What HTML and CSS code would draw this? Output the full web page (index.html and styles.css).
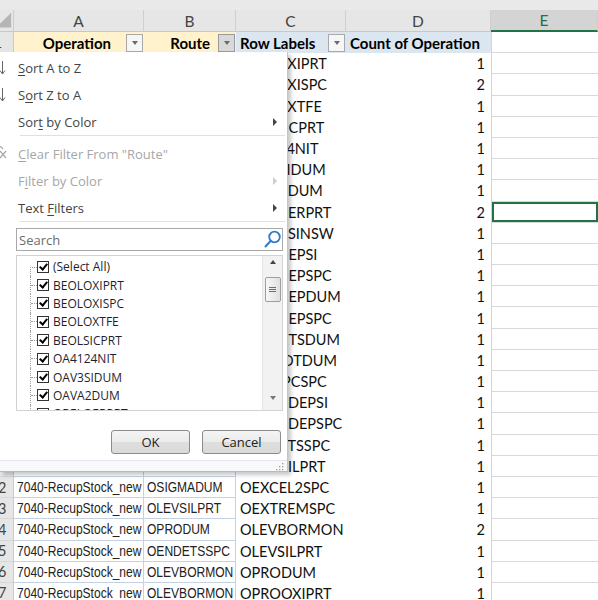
FILE: index.html
```html
<!DOCTYPE html>
<html>
<head>
    <title>Filter - Route</title>
    <link rel="stylesheet" href="styles.css">
</head>
<body>
<div class="app">
    <div class="topbar"></div>

    <div class="sheet">
        <div class="corner"><svg width="14" height="22" viewBox="0 0 14 22"><polygon points="12,2 12,18 0,18 0,14" fill="#b5b5b5"/></svg></div>
        <div class="col">A</div>
        <div class="col">B</div>
        <div class="col">C</div>
        <div class="col">D</div>
        <div class="col col-sel">E</div>

        <div class="rh"><span>1</span></div>
        <div class="th th-a"><span class="th-label">Operation</span><span class="dd"></span></div>
        <div class="th th-b"><span class="th-label">Route</span><span class="dd dd-on"></span></div>
        <div class="th th-c"><span class="th-label">Row Labels</span><span class="dd"></span></div>
        <div class="th th-d"><span class="th-label">Count of Operation</span></div>
        <div class="e"></div>

        <div class="rh"><span>2</span></div><div class="ab"></div><div class="ab"></div><div class="lbl">BEOLOXIPRT</div><div class="cnt">1</div><div class="e"></div>
        <div class="rh"><span>3</span></div><div class="ab"></div><div class="ab"></div><div class="lbl">BEOLOXISPC</div><div class="cnt">2</div><div class="e"></div>
        <div class="rh"><span>4</span></div><div class="ab"></div><div class="ab"></div><div class="lbl">BEOLOXTFE</div><div class="cnt">1</div><div class="e"></div>
        <div class="rh"><span>5</span></div><div class="ab"></div><div class="ab"></div><div class="lbl">BEOLSICPRT</div><div class="cnt">1</div><div class="e"></div>
        <div class="rh"><span>6</span></div><div class="ab"></div><div class="ab"></div><div class="lbl">OA4124NIT</div><div class="cnt">1</div><div class="e"></div>
        <div class="rh"><span>7</span></div><div class="ab"></div><div class="ab"></div><div class="lbl">OAV3SIDUM</div><div class="cnt">1</div><div class="e"></div>
        <div class="rh"><span>8</span></div><div class="ab"></div><div class="ab"></div><div class="lbl">OAVA2DUM</div><div class="cnt">1</div><div class="e"></div>
        <div class="rh"><span>9</span></div><div class="ab"></div><div class="ab"></div><div class="lbl">OBELOERPRT</div><div class="cnt">2</div><div class="e e-sel"></div>
        <div class="rh"><span>10</span></div><div class="ab"></div><div class="ab"></div><div class="lbl">OBELOSINSW</div><div class="cnt">1</div><div class="e"></div>
        <div class="rh"><span>11</span></div><div class="ab"></div><div class="ab"></div><div class="lbl">OLEBOEPSI</div><div class="cnt">1</div><div class="e"></div>
        <div class="rh"><span>12</span></div><div class="ab"></div><div class="ab"></div><div class="lbl">OLEBOEPSPC</div><div class="cnt">1</div><div class="e"></div>
        <div class="rh"><span>13</span></div><div class="ab"></div><div class="ab"></div><div class="lbl">OBOLEEPDUM</div><div class="cnt">1</div><div class="e"></div>
        <div class="rh"><span>14</span></div><div class="ab"></div><div class="ab"></div><div class="lbl">OBOLEEPSPC</div><div class="cnt">1</div><div class="e"></div>
        <div class="rh"><span>15</span></div><div class="ab"></div><div class="ab"></div><div class="lbl">OLBOETSDUM</div><div class="cnt">1</div><div class="e"></div>
        <div class="rh"><span>16</span></div><div class="ab"></div><div class="ab"></div><div class="lbl">OENDOTDUM</div><div class="cnt">1</div><div class="e"></div>
        <div class="rh"><span>17</span></div><div class="ab"></div><div class="ab"></div><div class="lbl">OENDPCSPC</div><div class="cnt">1</div><div class="e"></div>
        <div class="rh"><span>18</span></div><div class="ab"></div><div class="ab"></div><div class="lbl">OBELODEPSI</div><div class="cnt">1</div><div class="e"></div>
        <div class="rh"><span>19</span></div><div class="ab"></div><div class="ab"></div><div class="lbl">OBELODEPSPC</div><div class="cnt">1</div><div class="e"></div>
        <div class="rh"><span>20</span></div><div class="ab"></div><div class="ab"></div><div class="lbl">OBELOTSSPC</div><div class="cnt">1</div><div class="e"></div>
        <div class="rh"><span>21</span></div><div class="ab"></div><div class="ab"></div><div class="lbl">OBELOILPRT</div><div class="cnt">1</div><div class="e"></div>

        <div class="rh"><span>22</span></div><div class="ab"><span>7040-RecupStock_new</span></div><div class="ab"><span>OSIGMADUM</span></div><div class="lbl">OEXCEL2SPC</div><div class="cnt">1</div><div class="e"></div>
        <div class="rh"><span>23</span></div><div class="ab"><span>7040-RecupStock_new</span></div><div class="ab"><span>OLEVSILPRT</span></div><div class="lbl">OEXTREMSPC</div><div class="cnt">1</div><div class="e"></div>
        <div class="rh"><span>24</span></div><div class="ab"><span>7040-RecupStock_new</span></div><div class="ab"><span>OPRODUM</span></div><div class="lbl">OLEVBORMON</div><div class="cnt">2</div><div class="e"></div>
        <div class="rh"><span>25</span></div><div class="ab"><span>7040-RecupStock_new</span></div><div class="ab"><span>OENDETSSPC</span></div><div class="lbl">OLEVSILPRT</div><div class="cnt">1</div><div class="e"></div>
        <div class="rh"><span>26</span></div><div class="ab"><span>7040-RecupStock_new</span></div><div class="ab"><span>OLEVBORMON</span></div><div class="lbl">OPRODUM</div><div class="cnt">1</div><div class="e"></div>
        <div class="rh"><span>27</span></div><div class="ab"><span>7040-RecupStock_new</span></div><div class="ab"><span>OLEVBORMON</span></div><div class="lbl">OPROOXIPRT</div><div class="cnt">1</div><div class="e"></div>
    </div>

    <!-- filter dropdown of the Route column -->
    <div class="filter">
        <div class="mi">
            <span class="ico"><svg width="8" height="16" viewBox="0 0 8 16"><path d="M2.5 1V14M0 10.5L2.5 14L5 10.5" fill="none" stroke="#666" stroke-width="1"/></svg></span>
            <span class="txt"><u>S</u>ort A to Z</span>
        </div>
        <div class="mi">
            <span class="ico"><svg width="8" height="16" viewBox="0 0 8 16"><path d="M2.5 1V14M0 10.5L2.5 14L5 10.5" fill="none" stroke="#666" stroke-width="1"/></svg></span>
            <span class="txt">S<u>o</u>rt Z to A</span>
        </div>
        <div class="mi">
            <span class="ico"></span>
            <span class="txt">Sor<u>t</u> by Color</span>
            <span class="sub"></span>
        </div>
        <div class="sep"></div>
        <div class="mi off">
            <span class="ico"><svg width="8" height="16" viewBox="0 0 8 16"><path d="M0 0L3 3M0 5L6 12M6 5L0 12" fill="none" stroke="#a8a8a8" stroke-width="1.2"/></svg></span>
            <span class="txt"><u>C</u>lear Filter From "Route"</span>
        </div>
        <div class="mi off">
            <span class="ico"></span>
            <span class="txt">F<u>i</u>lter by Color</span>
            <span class="sub"></span>
        </div>
        <div class="mi">
            <span class="ico"></span>
            <span class="txt">Text <u>F</u>ilters</span>
            <span class="sub"></span>
        </div>
        <div class="sep sep-last"></div>

        <div class="search">
            <span class="ph">Search</span>
            <svg width="20" height="21" viewBox="0 0 20 21"><circle cx="12.5" cy="8" r="5.3" fill="none" stroke="#2f7bd0" stroke-width="1.8"/><path d="M8.8 11.8L3.5 17.5" stroke="#2f7bd0" stroke-width="2" stroke-linecap="round"/></svg>
        </div>

        <div class="list">
            <div class="tree">
                <div class="node first"><span class="twig"></span><span class="cb"></span><span class="name">(Select All)</span></div>
                <div class="node"><span class="twig"></span><span class="cb"></span><span class="name">BEOLOXIPRT</span></div>
                <div class="node"><span class="twig"></span><span class="cb"></span><span class="name">BEOLOXISPC</span></div>
                <div class="node"><span class="twig"></span><span class="cb"></span><span class="name">BEOLOXTFE</span></div>
                <div class="node"><span class="twig"></span><span class="cb"></span><span class="name">BEOLSICPRT</span></div>
                <div class="node"><span class="twig"></span><span class="cb"></span><span class="name">OA4124NIT</span></div>
                <div class="node"><span class="twig"></span><span class="cb"></span><span class="name">OAV3SIDUM</span></div>
                <div class="node"><span class="twig"></span><span class="cb"></span><span class="name">OAVA2DUM</span></div>
                <div class="node"><span class="twig"></span><span class="cb"></span><span class="name">OBELOERPRT</span></div>
            </div>
            <div class="scroll">
                <span class="arr-up"></span>
                <span class="thumb"><span class="grip"></span></span>
                <span class="arr-down"></span>
            </div>
        </div>

        <div class="btns">
            <button class="btn">OK</button>
            <button class="btn">Cancel</button>
        </div>

        <div class="foot">
            <svg width="9" height="9" viewBox="0 0 9 9" fill="#9a9a9a"><rect x="7" y="1" width="1.3" height="1.3"/><rect x="4" y="4" width="1.3" height="1.3"/><rect x="7" y="4" width="1.3" height="1.3"/><rect x="1" y="7" width="1.3" height="1.3"/><rect x="4" y="7" width="1.3" height="1.3"/><rect x="7" y="7" width="1.3" height="1.3"/></svg>
        </div>
    </div>
</div>
</body>
</html>
```

FILE: styles.css
```css
body {
    margin: 0;
    padding: 0;
    background: #fff;
    font-family: Lato, "Open Sans", sans-serif;
}
.app {
    position: relative;
    width: 598px;
    height: 600px;
    overflow: hidden;
}
.topbar {
    height: 10px;
    background: #e9e9e9;
}

/* grid of cells */
.sheet {
    display: grid;
    grid-template-columns: 14px 130px 92px 110px 145px 107px;
    grid-template-rows: 22px;
    grid-auto-rows: 21.2px;
    font-size: 14.5px;
    color: #111;
}
.sheet > div {
    box-sizing: border-box;
    display: flex;
    align-items: center;
    overflow: hidden;
    white-space: nowrap;
}
.corner {
    background: #e6e6e6;
    border-right: 1px solid #cdcdcd;
    border-bottom: 1px solid #c8c8c8;
}
.col {
    justify-content: center;
    background: #e6e6e6;
    border-right: 1px solid #cfcfcf;
    border-bottom: 1px solid #c8c8c8;
    color: #444;
    font-size: 15.5px;
}
.col-sel {
    background: #d4d4d4;
    color: #217346;
    border-bottom: 2px solid #217346;
}
.rh {
    justify-content: flex-end;
    background: #e6e6e6;
    border-right: 1px solid #c9c9c9;
    border-bottom: 1px solid #d6d6d6;
    color: #444;
}
.rh span {
    flex: 0 0 30px;
    text-align: center;
}

.th {
    font-weight: bold;
    font-size: 15px;
    color: #000;
}
.th-a, .th-b {
    background: #fff2cc;
}
.th-c, .th-d {
    background: #dce6f1;
}
.th-label {
    flex: 1;
}
.th-a .th-label {
    text-align: right;
    padding-right: 15px;
}
.th-b .th-label {
    text-align: right;
    padding-right: 8px;
}
.th-c .th-label, .th-d .th-label {
    padding-left: 4px;
}
.dd {
    flex: none;
    width: 17px;
    height: 18px;
    box-sizing: border-box;
    margin-right: 1px;
    border: 1px solid #a9a9a9;
    background: #f6f6f6;
    display: flex;
    align-items: center;
    justify-content: center;
}
.dd::after {
    content: "";
    border-left: 3.5px solid transparent;
    border-right: 3.5px solid transparent;
    border-top: 4px solid #6a6a6a;
}
.dd-on {
    background: #d9d9d9;
    border-color: #9a9a9a;
}

/* table cells use a narrow face; squeeze Arial metrics to match it */
.ab {
    padding-left: 3px;
    border-right: 1px solid #c4d2e6;
    border-bottom: 1px solid #c4d2e6;
    font-family: "Liberation Sans", Arial, sans-serif;
    font-size: 14.5px;
    color: #222;
}
.ab span {
    display: inline-block;
    transform: scaleX(0.83);
    transform-origin: left center;
}
.lbl {
    padding-left: 4px;
}
.cnt {
    justify-content: flex-end;
    padding-right: 6px;
}
.e {
    border-left: 1px solid #d4d4d4;
    border-bottom: 1px solid #d9d9d9;
}
.e-sel {
    box-shadow: inset 0 0 0 2px #217346;
}

/* filter dropdown */
.filter {
    position: absolute;
    left: 0;
    top: 52px;
    width: 288px;
    box-sizing: border-box;
    padding-top: 2px;
    background: #fff;
    border-right: 1px solid #c4c4c4;
    border-bottom: 1px solid #b9b9b9;
    box-shadow: 3px 3px 4px rgba(0, 0, 0, 0.22);
    font-family: "Open Sans", "Noto Sans", sans-serif;
    display: flex;
    flex-direction: column;
}
.mi {
    height: 27px;
    display: flex;
    align-items: center;
    font-size: 13px;
    color: #444;
}
.mi u {
    text-underline-offset: 2px;
}
.ico {
    flex: none;
    width: 18px;
    display: flex;
}
.txt {
    flex: 1;
}
.sub {
    width: 0;
    height: 0;
    margin-right: 10px;
    border-left: 4px solid #444;
    border-top: 4px solid transparent;
    border-bottom: 4px solid transparent;
}
.mi.off {
    color: #a6a6a6;
}
.mi.off .sub {
    border-left-color: #cccccc;
}
.sep {
    height: 1px;
    margin: 0 2px 4px 20px;
    background: #e0e0e0;
}
.sep-last {
    margin-bottom: 6px;
}

.search {
    height: 23px;
    margin: 0 4px 0 16px;
    box-sizing: border-box;
    border: 1px solid #a9a9a9;
    display: flex;
    align-items: center;
    padding-left: 2px;
    font-size: 13px;
    color: #6d6d6d;
}
.ph {
    flex: 1;
}

.list {
    height: 156px;
    margin: 4px 4px 0 16px;
    box-sizing: border-box;
    border: 1px solid #d2d2d2;
    display: flex;
}
.tree {
    flex: 1;
    overflow: hidden;
    padding-top: 1.5px;
}
.node {
    height: 18.4px;
    margin-left: 13px;
    border-left: 1px dotted #a0a0a0;
    display: flex;
    align-items: center;
    font-size: 12px;
    color: #1f1f2f;
}
.twig {
    width: 6px;
    box-sizing: border-box;
    border-top: 1px dotted #a0a0a0;
}
.node.first {
    border-left: none;
}
.node.first .twig {
    width: 7px;
    height: 9px;
    align-self: flex-end;
    border-left: 1px dotted #a0a0a0;
}
.cb {
    flex: none;
    position: relative;
    width: 12px;
    height: 12px;
    box-sizing: border-box;
    border: 1px solid #333;
    background: #fff;
}
.cb::after {
    content: "";
    position: absolute;
    left: 3px;
    top: 0;
    width: 3px;
    height: 6px;
    border: solid #000;
    border-width: 0 2px 2px 0;
    transform: rotate(40deg);
}
.name {
    margin-left: 4px;
}

.scroll {
    flex: none;
    width: 20px;
    box-sizing: border-box;
    background: #f2f2f2;
    border-left: 1px solid #e6e6e6;
    display: flex;
    flex-direction: column;
    align-items: center;
}
.arr-up, .arr-down {
    width: 0;
    height: 0;
    border-left: 3.5px solid transparent;
    border-right: 3.5px solid transparent;
}
.arr-up {
    margin-top: 4px;
    border-bottom: 4px solid #444;
}
.arr-down {
    margin-top: auto;
    margin-bottom: 10px;
    border-top: 4px solid #777;
}
.thumb {
    width: 16px;
    height: 25px;
    margin-top: 13px;
    box-sizing: border-box;
    border: 1px solid #9e9e9e;
    border-radius: 2px;
    background: linear-gradient(to right, #f7f7f7, #e0e0e0);
    display: flex;
    align-items: center;
    justify-content: center;
}
.grip {
    width: 7px;
    height: 5px;
    background: repeating-linear-gradient(#6f6f6f 0 1px, transparent 1px 2px);
}

.btns {
    display: flex;
    justify-content: flex-end;
    gap: 12px;
    margin: 19px 6px 0 0;
}
.btn {
    width: 79px;
    height: 24px;
    box-sizing: border-box;
    padding: 0;
    border: 1px solid #8c8c8c;
    border-radius: 3px;
    background: linear-gradient(#f4f4f4, #ebebeb 50%, #dedede 51%, #d9d9d9);
    font-family: "Open Sans", "Noto Sans", sans-serif;
    font-size: 13px;
    color: #222;
}

.foot {
    height: 11px;
    margin-top: 6px;
    box-sizing: border-box;
    border-top: 1px solid #e2e6ec;
    background: #f8f9fb;
    display: flex;
    justify-content: flex-end;
    align-items: flex-end;
    padding-right: 3px;
}
```
